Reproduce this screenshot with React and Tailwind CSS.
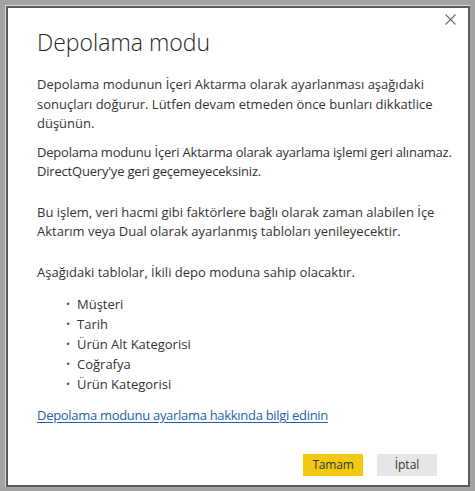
import React from 'react'

const tables = ['Müşteri', 'Tarih', 'Ürün Alt Kategorisi', 'Coğrafya', 'Ürün Kategorisi']

export default function App() {
  return (
    <div className="w-[475px] h-[491px] bg-[#a3a3a3] pt-[5px] pl-[5px] pr-[5px] pb-[4px] font-['Open_Sans',sans-serif]">
      <div className="h-full border-l border-t border-[#d8d8d8]">
        <div className="h-full w-[464px] border-2 border-[#5a5a5a] bg-white flex flex-col">
          {/* Header */}
          <div className="flex justify-end pt-[5px] pr-[12px] h-[18px]">
            <button className="text-[#6a6a6a]">
              <svg width="11" height="11" viewBox="0 0 11 11" stroke="currentColor" strokeWidth="1.1" fill="none">
                <path d="M0.5 0.5 L10.5 10.5 M10.5 0.5 L0.5 10.5" />
              </svg>
            </button>
          </div>

          <div className="pl-[29px] pr-[8px] text-[#333] text-[13px] leading-[19.5px]">
            <h1 className="text-[23px] leading-[32px] font-light text-[#252525] mb-[17px]">Depolama modu</h1>

            <p className="mb-[9px] pr-[20px]">
              Depolama modunun İçeri Aktarma olarak ayarlanması aşağıdaki sonuçları doğurur. Lütfen devam etmeden önce bunları dikkatlice düşünün.
            </p>
            <p className="mb-[21px] whitespace-nowrap tracking-[-0.2px]">
              Depolama modunu İçeri Aktarma olarak ayarlama işlemi geri alınamaz.
              <br />
              DirectQuery'ye geri geçemeyeceksiniz.
            </p>
            <p className="mb-[21px] pr-[12px]">
              Bu işlem, veri hacmi gibi faktörlere bağlı olarak zaman alabilen İçe Aktarım veya Dual olarak ayarlanmış tabloları yenileyecektir.
            </p>
            <p className="mb-[12px]">Aşağıdaki tablolar, İkili depo moduna sahip olacaktır.</p>

            <ul className="pl-[29px] leading-[20px]">
              {tables.map((t) => (
                <li key={t} className="flex items-center">
                  <span className="w-[11px] text-[11px] text-[#555]">•</span>
                  <span>{t}</span>
                </li>
              ))}
            </ul>

            <a href="#" className="block mt-[12px] text-[#1f5fa6] underline underline-offset-2 tracking-[-0.3px]">
              Depolama modunu ayarlama hakkında bilgi edinin
            </a>
          </div>

          {/* Footer */}
          <div className="mt-auto flex justify-end gap-[14px] pr-[31px] pb-[9px]">
            <button className="w-[60px] h-[22px] bg-[#f2c811] text-[#333] text-[12px] tracking-[-0.2px]">Tamam</button>
            <button className="w-[60px] h-[22px] bg-[#e6e6e6] text-[#333] text-[12px]">İptal</button>
          </div>
        </div>
      </div>
    </div>
  )
}
